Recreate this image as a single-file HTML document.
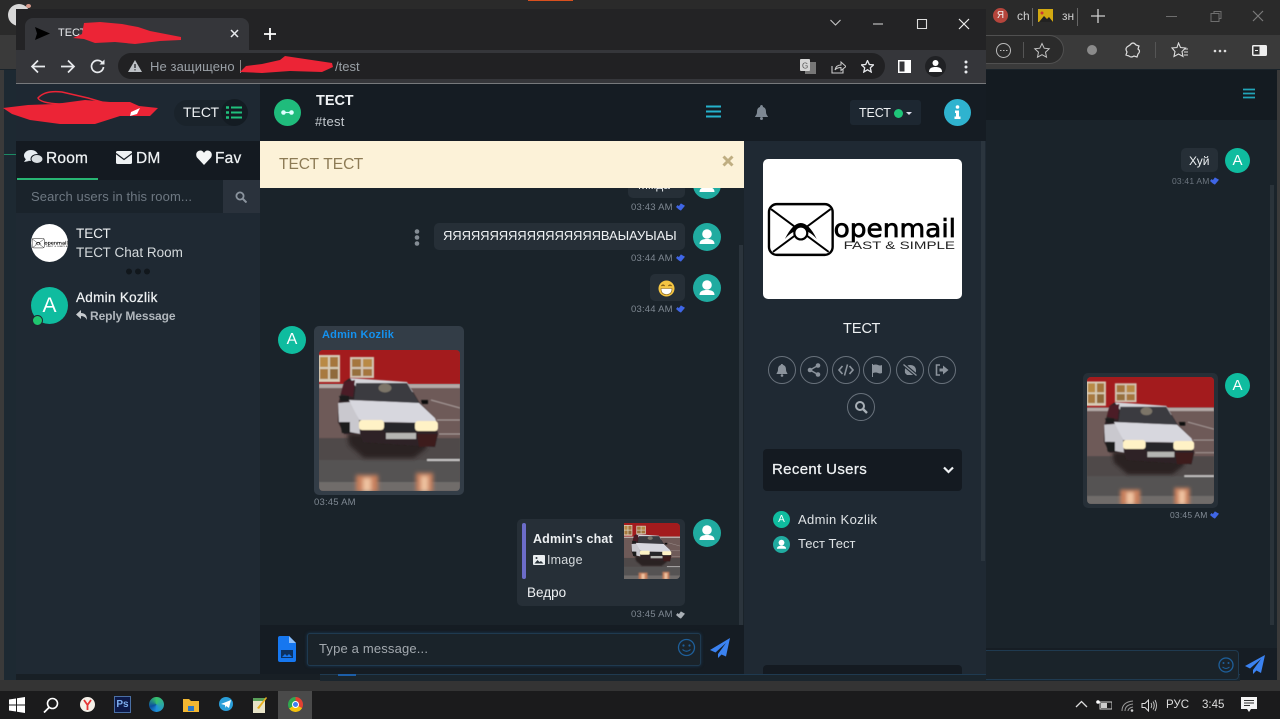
<!DOCTYPE html>
<html lang="ru"><head><meta charset="utf-8"><title>TECT</title>
<style>
html,body{margin:0;padding:0;width:1280px;height:719px;overflow:hidden;background:#1a232a}
body{position:relative;font-family:"Liberation Sans","DejaVu Sans",sans-serif;color:#eef1f3}
.b,.t,svg.a{position:absolute}
.t{white-space:nowrap;line-height:20px;height:20px}
.av{position:absolute;width:28px;height:28px;border-radius:50%;background:#20aba0;overflow:hidden}
.ag{position:absolute;border-radius:50%;background:#0fbc9f;color:#fff;text-align:center}
.bub{position:absolute;background:#262f37;border-radius:5px}
.tm{font-size:9.5px;color:#7f8892;letter-spacing:.2px}
.rnd{position:absolute;width:26px;height:26px;border:1px solid #68717b;border-radius:50%}
.rnd svg{position:absolute;left:5px;top:5px}
.m{-webkit-text-stroke:.25px currentColor}
</style></head><body>
<svg width="0" height="0" style="position:absolute">
<defs>
<filter id="bl" x="-5%" y="-5%" width="110%" height="110%"><feGaussianBlur stdDeviation=".6"/></filter>
<filter id="bl2" x="-30%" y="-30%" width="160%" height="160%"><feGaussianBlur stdDeviation="2"/></filter>
<symbol id="car" viewBox="0 0 141 141" preserveAspectRatio="none">
<rect width="141" height="141" fill="#5a5150"/>
<rect width="141" height="34" fill="#a31b1d"/>
<g filter="url(#bl)">
<rect x="-1" y="5" width="22" height="27" fill="#d8cdb8"/>
<rect x="1" y="7" width="8" height="10" fill="#b98a45"/><rect x="11" y="7" width="8" height="10" fill="#a5763c"/><rect x="1" y="19" width="8" height="10" fill="#a87a3f"/><rect x="11" y="19" width="8" height="10" fill="#8f6a3a"/>
<rect x="31" y="7" width="24" height="21" fill="#d3c5b3"/>
<rect x="33" y="9" width="9" height="8" fill="#a5763c"/><rect x="44" y="9" width="9" height="8" fill="#b98a45"/><rect x="33" y="19" width="9" height="7" fill="#96703e"/><rect x="44" y="19" width="9" height="7" fill="#a5763c"/>
<rect y="34" width="141" height="4" fill="#b4a9a6"/>
<rect y="38" width="141" height="50" fill="#6e5a58"/>
<path d="M112 50l29 8M118 70h23M120 84h23" stroke="#a79b99" stroke-width="1"/>
<rect y="88" width="141" height="22" fill="#4f4a49"/>
<rect y="110" width="141" height="31" fill="#545252"/>
<rect x="108" y="109" width="33" height="2" fill="#c4c2c2"/>
<rect x="0" y="132" width="141" height="9" fill="#6f6c6b"/>
</g>
<g filter="url(#bl2)"><rect x="37" y="125" width="22" height="17" fill="#c87f5c"/><rect x="97" y="123" width="17" height="19" fill="#c87f5c"/><rect x="44" y="128" width="8" height="14" fill="#efc3a0"/><rect x="102" y="126" width="7" height="16" fill="#efc3a0"/></g>
<g filter="url(#bl2)"><path d="M28 83L104 84 108 98 95 108H45L30 95Z" fill="#2a2122"/></g>
<g filter="url(#bl)">
<path d="M19 55L25 32 31 28 88 32 100 52 116 68 119 84 116 97 44 92 41 84H25L19 72Z" fill="#2e2325"/>
<path d="M31 28L88 32 94 42 37 37Z" fill="#d5d5da"/>
<path d="M37 33L88 33 100 53 35 50Z" fill="#3a3b41"/>
<ellipse cx="66" cy="38" rx="6.500" ry="4.500" fill="#7b7468"/>
<path d="M25 32L36 30 34 47 22 44Z" fill="#4b1f25"/>
<path d="M19 53L32 52 40 70 41 84 31 82 26 72H20Z" fill="#c9c8ce"/>
<path d="M21 72h10v11h-8z" fill="#1d1b1d"/>
<path d="M30 50L100 53 116 68 118 73 62 72 40 70Z" fill="#d7d7de"/>
<path d="M102 50h7v4h-6z" fill="#111"/><path d="M20 46h10v5h-8z" fill="#1a1a1d"/>
<rect x="40" y="70" width="25" height="10" rx="3" fill="#fff2c6"/>
<rect x="96" y="71" width="23" height="10" rx="3" fill="#fff2c6"/>
<rect x="65" y="73" width="31" height="9" fill="#27252a"/>
<rect x="67" y="83" width="30" height="6" fill="#b5b5b2"/>
<path d="M98 84h20l-2 12-16 1z" fill="#3c1d1f"/>
</g>
</symbol>
<symbol id="user" viewBox="0 0 28 28"><circle cx="14" cy="11" r="4.800" fill="#fff"/><path d="M6.500 21c0-4 3.500-5 7.500-5s7.500 1 7.500 5z" fill="#fff"/></symbol>
<symbol id="check" viewBox="0 0 11 9"><path d="M0 4.500l2-2.500 1.500 1.500L6 0l5 3-5 6-2.500-1.500z" fill="#3f66e6"/></symbol>
<symbol id="checkg" viewBox="0 0 11 9"><path d="M0 4.500l2-2.500 1.500 1.500L6 0l5 3-5 6-2.500-1.500z" fill="#aab0b6"/></symbol>
<symbol id="logo" viewBox="0 0 200 140">
<rect x="6" y="45" width="64" height="51" rx="8" fill="none" stroke="#000" stroke-width="2.400"/>
<path d="M8 50L66 93M68 50L10 93" stroke="#000" stroke-width="2" fill="none"/>
<path d="M22 80Q38 48 54 80Q38 62 22 80Z" fill="#000"/><circle cx="38" cy="74" r="6.500" fill="#fff" stroke="#000" stroke-width="2.200"/>
<text x="71" y="78" font-family="DejaVu Sans,sans-serif" font-size="25" stroke="#000" stroke-width=".7" textLength="123" lengthAdjust="spacingAndGlyphs">openmail</text>
<text x="81" y="90" font-family="Liberation Sans,sans-serif" font-size="11" fill="#222" textLength="112" lengthAdjust="spacingAndGlyphs">FAST &amp; SIMPLE</text>
</symbol>
</defs></svg>

<!-- outer Edge window -->
<div class="b" style="left:0;top:0;width:1280px;height:35px;background:#2a2a2a"></div>
<div class="b" style="left:0;top:35px;width:1280px;height:34px;background:#3a3a3a"></div>
<div class="b" style="left:528px;top:0;width:45px;height:1px;background:#d9501e"></div>
<div class="b" style="left:8px;top:4px;width:22px;height:22px;border-radius:50%;background:#d8d8d8"></div>
<div class="b" style="left:26px;top:4px;width:5px;height:4px;border-radius:50%;background:#d79a8c"></div>
<div class="b" style="left:0;top:70px;width:1280px;height:610px;background:#1a232a"></div>
<div class="b" style="left:4px;top:70px;width:12px;height:610px;background:#1d2932"></div>
<div class="b" style="left:0;top:70px;width:4px;height:620px;background:#3a3a3a"></div>
<div class="b" style="left:4px;top:154px;width:12px;height:1px;background:#1d8a63"></div>
<div class="b" style="left:986px;top:70px;width:291px;height:50px;background:#141b21"></div>
<div class="b" style="left:1277px;top:70px;width:3px;height:620px;background:#3a3a3a"></div>
<div class="b" style="left:0;top:680px;width:1280px;height:11px;background:#343434"></div>
<div class="b" style="left:986px;top:648px;width:291px;height:32px;background:#161d24"></div>
<div class="b" style="left:320px;top:674px;width:920px;height:6px;background:#1a252d;border-top:1px solid #1f3a50"></div>
<div class="b" style="left:986px;top:650px;width:252px;height:28px;background:#1a232a;border:1px solid #1f3a50;border-left:0;border-radius:0 4px 4px 0"></div>
<div class="b" style="left:16px;top:674px;width:304px;height:6px;background:#181f25"></div>
<div class="b" style="left:338px;top:674px;width:18px;height:2px;background:#1c5ea8"></div>

<!-- Edge tab bar right -->
<div class="b" style="left:993px;top:8px;width:15px;height:15px;border-radius:50%;background:#b5453c;color:#eee;font-size:10px;line-height:15px;text-align:center">Я</div>
<div class="t" style="left:1017px;top:6px;font-size:12px;color:#cfcfcf">ch</div>
<div class="b" style="left:1032px;top:8px;width:1px;height:18px;background:#666"></div>
<svg class="a" style="left:1038px;top:9px" width="15" height="13"><rect width="15" height="13" fill="#d2a912"/><path d="M1 13l5-6 3 3 2-2 4 5z" fill="#222"/><circle cx="4" cy="4" r="1.500" fill="#c33"/></svg>
<div class="t" style="left:1062px;top:6px;font-size:12px;color:#cfcfcf">зн</div>
<div class="b" style="left:1077px;top:8px;width:1px;height:18px;background:#666"></div>
<svg class="a" style="left:1090px;top:8px" width="16" height="16"><path d="M8 1v14M1 8h14" stroke="#cfcfcf" stroke-width="1.300"/></svg>
<svg class="a" style="left:1166px;top:10px" width="100" height="13"><path d="M0 6.500h11" stroke="#6e6e6e"/><path d="M45 3.500h8v8h-8zM48 3.500v-2h7v7h-2" fill="none" stroke="#6e6e6e"/><path d="M87 1l10 10M97 1L87 11" stroke="#7a7a7a" stroke-width="1.200"/></svg>

<!-- Edge toolbar right -->
<div class="b" style="left:986px;top:35px;width:78px;height:29px;background:#2b2b2b;border:1px solid #505050;border-left:0;border-radius:0 15px 15px 0;box-sizing:border-box"></div>
<svg class="a" style="left:994px;top:41px" width="60" height="18"><circle cx="9.500" cy="9.500" r="7" fill="none" stroke="#bbb"/><path d="M6 9.500h1.500M9 9.500h1.500M12 9.500h1.500" stroke="#bbb"/><path d="M29.500 1v16" stroke="#555"/><path d="M48 2.500l2.200 4.700 5 .6-3.700 3.400 1 5-4.500-2.500-4.500 2.500 1-5-3.700-3.400 5-.6z" fill="none" stroke="#c4c4c4"/></svg>
<div class="b" style="left:1087px;top:45px;width:10px;height:10px;border-radius:50%;background:#8b8b8b"></div>
<svg class="a" style="left:1125px;top:42px" width="16" height="17"><path d="M5 3q3-4 6 0l3 1-1 3q3 2 0 5l-1 3-3-1q-3 2-5 0l-3-1 1-3q-2-3 0-5z" fill="none" stroke="#ddd" stroke-width="1.200"/></svg>
<div class="b" style="left:1155px;top:42px;width:1px;height:16px;background:#555"></div>
<svg class="a" style="left:1171px;top:42px" width="18" height="17"><path d="M7.500 1l2 4.500 5 .5-3.500 3.500 1 5-4.500-2.500-4.500 2.500 1-5L1 6l5-.5z" fill="none" stroke="#ddd" stroke-width="1.100"/><path d="M13 7h4M13 10h4M13 13h4" stroke="#ddd"/></svg>
<svg class="a" style="left:1213px;top:49px" width="14" height="4"><circle cx="2" cy="2" r="1.300" fill="#ddd"/><circle cx="7" cy="2" r="1.300" fill="#ddd"/><circle cx="12" cy="2" r="1.300" fill="#ddd"/></svg>
<svg class="a" style="left:1252px;top:45px" width="15" height="12"><rect width="15" height="11" rx="1.500" fill="#eee"/><rect x="1.500" y="1.500" width="6" height="8" fill="#333"/><path d="M3 5.500h3" stroke="#eee"/></svg>

<!-- background chat page right -->
<svg class="a" style="left:1243px;top:88px" width="12" height="11"><path d="M0 1.500h12M0 5.500h12M0 9.500h12" stroke="#22a5b8" stroke-width="1.800"/></svg>
<div class="b" style="left:986px;top:120px;width:291px;height:528px;background:#1a232a"></div>
<div class="b" style="left:1270px;top:185px;width:4px;height:440px;background:#2a333a"></div>
<div class="bub" style="left:1181px;top:148px;width:37px;height:24px"></div>
<div class="t" style="left:1189px;top:151px;font-size:12px">Хуй</div>
<div class="ag" style="left:1225px;top:148px;width:25px;height:25px;font-size:15px;line-height:25px">A</div>
<div class="t tm" style="left:1172px;top:171px;font-size:8.500px;color:#6c757f">03:41 AM</div>
<svg class="a" style="left:1210px;top:177px" width="9" height="8"><use href="#check"/></svg>
<div class="bub" style="left:1083px;top:373px;width:135px;height:135px"></div>
<svg class="a" style="left:1087px;top:377px;border-radius:4px" width="127" height="127"><use href="#car" width="127" height="127"/></svg>
<div class="ag" style="left:1225px;top:373px;width:25px;height:25px;font-size:15px;line-height:25px">A</div>
<div class="t tm" style="left:1170px;top:505px;font-size:8.500px;color:#838c96">03:45 AM</div>
<svg class="a" style="left:1210px;top:511px" width="9" height="8"><use href="#check"/></svg>
<svg class="a" style="left:1217px;top:656px" width="18" height="18"><circle cx="9" cy="9" r="7" fill="none" stroke="#1e5f9a" stroke-width="1.300"/><circle cx="6.500" cy="7" r="1" fill="#1e5f9a"/><circle cx="11.500" cy="7" r="1" fill="#1e5f9a"/><path d="M5.500 11q3.500 3 7 0" fill="none" stroke="#1e5f9a"/></svg>
<svg class="a" style="left:1245px;top:655px" width="20" height="19"><path d="M20 0L0 11l5 2.500L16 4 8 15v4l3.500-3.500L16 18z" fill="#3b82f0"/></svg>

<!-- Chrome window -->
<div class="b" style="left:16px;top:9px;width:970px;height:41px;background:#232325"></div>
<div class="b" style="left:25px;top:18px;width:224px;height:32px;background:#35363a;border-radius:8px 8px 0 0"></div>
<svg class="a" style="left:35px;top:27px" width="15" height="13"><path d="M0 0l15 6.500L0 13l2-6.500z" fill="#000"/></svg>
<div class="t" style="left:58px;top:23px;font-size:11px;color:#e8eaed">ТЕСТ -</div>
<svg class="a" style="left:230px;top:29px" width="9" height="9"><path d="M1 1l7 7M8 1L1 8" stroke="#e8eaed" stroke-width="1.500"/></svg>
<svg class="a" style="left:264px;top:28px" width="12" height="12"><path d="M6 0v12M0 6h12" stroke="#fff" stroke-width="1.800"/></svg>
<svg class="a" style="left:830px;top:19px" width="11" height="8"><path d="M.5 1l5 5 5-5" fill="none" stroke="#c8c8c8" stroke-width="1.100"/></svg>
<svg class="a" style="left:873px;top:17px" width="100" height="14"><path d="M0 7h10" stroke="#ddd"/><path d="M44.500 2.500h9v9h-9z" fill="none" stroke="#ddd" stroke-width="1.100"/><path d="M86 2l10 10M96 2L86 12" stroke="#eee" stroke-width="1.200"/></svg>
<!-- toolbar -->
<div class="b" style="left:16px;top:50px;width:970px;height:33px;background:#35363a"></div>
<div class="b" style="left:16px;top:83px;width:970px;height:1px;background:#77797c"></div>
<div class="b" style="left:118px;top:53px;width:767px;height:26px;border-radius:13px;background:#212123"></div>
<svg class="a" style="left:30px;top:58px" width="76" height="17"><path d="M15 8.500H2M8 2.500l-6 6 6 6" fill="none" stroke="#e8eaed" stroke-width="1.700"/><path d="M31 8.500h13M38 2.500l6 6-6 6" fill="none" stroke="#e8eaed" stroke-width="1.700"/><path d="M72.500 5a6 6 0 1 0 1 4" fill="none" stroke="#e8eaed" stroke-width="1.700"/><path d="M74.500 1.500v5h-5z" fill="#e8eaed"/></svg>
<svg class="a" style="left:128px;top:60px" width="14" height="12"><path d="M7 0l7 12H0z" fill="#bdc1c6"/><path d="M7 4v4M7 9.200v1.200" stroke="#202124" stroke-width="1.300"/></svg>
<div class="t" style="left:150px;top:57px;font-size:13px;color:#9aa0a6;letter-spacing:.1px">Не защищено</div>
<div class="b" style="left:240px;top:60px;width:1px;height:13px;background:#888"></div>
<div class="t" style="left:335px;top:57px;font-size:13px;color:#9aa0a6">/test</div>
<svg class="a" style="left:800px;top:59px" width="16" height="15"><rect x="5" y="3" width="11" height="12" fill="#777"/><rect width="10" height="12" rx="1" fill="#d5d5d5"/><text x="2" y="9.500" font-size="8" font-family="Liberation Sans,sans-serif" fill="#555">G</text></svg>
<svg class="a" style="left:831px;top:60px" width="15" height="14"><path d="M1 6v7h11V9" fill="none" stroke="#ccc" stroke-width="1.100"/><path d="M4 10q1-5 6-5V2l5 4.500-5 4V7.500q-4 0-6 2.500z" fill="none" stroke="#ccc"/></svg>
<svg class="a" style="left:861px;top:60px" width="13" height="13"><path d="M6.500.5l1.800 4 4.200.4-3.200 2.900.9 4.200-3.700-2.200-3.700 2.200.9-4.200L.5 4.900l4.200-.4z" fill="none" stroke="#e8eaed" stroke-width="1.300"/></svg>
<svg class="a" style="left:898px;top:60px" width="13" height="13"><rect x=".75" y=".75" width="11.500" height="11.500" fill="none" stroke="#fff" stroke-width="1.500"/><rect x="6.500" y="1" width="5.500" height="11" fill="#fff"/></svg>
<div class="b" style="left:925px;top:56px;width:21px;height:21px;border-radius:50%;background:#202124"></div>
<svg class="a" style="left:929px;top:59px" width="13" height="14"><circle cx="6.500" cy="4" r="3" fill="#fff"/><path d="M0 13c0-4 3-5 6.500-5s6.500 1 6.500 5z" fill="#fff"/></svg>
<svg class="a" style="left:964px;top:60px" width="4" height="14"><circle cx="2" cy="2" r="1.500" fill="#e8eaed"/><circle cx="2" cy="7" r="1.500" fill="#e8eaed"/><circle cx="2" cy="12" r="1.500" fill="#e8eaed"/></svg>

<!-- App left sidebar -->
<div class="b" style="left:16px;top:84px;width:244px;height:590px;background:#1f2933"></div>
<div class="b" style="left:16px;top:84px;width:244px;height:57px;background:#1e2832"></div>
<div class="b" style="left:174px;top:100px;width:72px;height:26px;border-radius:13px;background:#1a232b"></div>
<div class="t" style="left:183px;top:102px;font-size:14px">ТЕСТ</div>
<div class="b" style="left:221px;top:99px;width:27px;height:27px;border-radius:50%;background:#141c23"></div>
<svg class="a" style="left:226px;top:106px" width="16" height="13"><path d="M0 1.500h3M0 6.500h3M0 11.500h3" stroke="#20c07c" stroke-width="2.400"/><path d="M5 1.500h11M5 6.500h11M5 11.500h11" stroke="#20c07c" stroke-width="2"/></svg>
<div class="b" style="left:16px;top:141px;width:244px;height:39px;background:#141a21"></div>
<div class="b" style="left:17px;top:178px;width:81px;height:2px;background:#28b573"></div>
<svg class="a" style="left:24px;top:150px" width="19" height="15"><ellipse cx="7" cy="5.500" rx="7" ry="5.500" fill="#e8eef2"/><path d="M2 9l-2 3 5-1z" fill="#e8eef2"/><ellipse cx="13" cy="9" rx="6" ry="4.500" fill="#d9dfe2" stroke="#141a21"/></svg>
<div class="t m" style="left:46px;top:149px;font-size:15.500px;letter-spacing:.2px">Room</div>
<svg class="a" style="left:116px;top:151px" width="16" height="13"><rect width="16" height="13" rx="1.500" fill="#eef1f3"/><path d="M0 2.500l8 6 8-6" fill="none" stroke="#141a21" stroke-width="1.200"/></svg>
<div class="t m" style="left:136px;top:149px;font-size:15.500px;letter-spacing:.2px">DM</div>
<svg class="a" style="left:196px;top:150px" width="16" height="15"><path d="M8 15L1 7.500C-1 4 1 .5 4.500.5 6 .5 7.500 1.500 8 3c.5-1.500 2-2.500 3.500-2.500C15 .5 17 4 15 7.500z" fill="#f3f5f6"/></svg>
<div class="t m" style="left:215px;top:149px;font-size:15.500px;letter-spacing:.2px">Fav</div>
<div class="b" style="left:16px;top:180px;width:207px;height:33px;background:#1a232b"></div>
<div class="t" style="left:31px;top:187px;font-size:13px;color:#6e7882;letter-spacing:.1px">Search users in this room...</div>
<div class="b" style="left:223px;top:180px;width:37px;height:33px;background:#2a323c"></div>
<svg class="a" style="left:235px;top:191px" width="12" height="12"><circle cx="5" cy="5" r="3.600" fill="none" stroke="#8b949e" stroke-width="1.800"/><path d="M7.500 7.500l4 4" stroke="#8b949e" stroke-width="2"/></svg>
<div class="b" style="left:31px;top:224px;width:37px;height:38px;border-radius:50%;background:#fff;overflow:hidden"><svg style="position:absolute;left:0;top:-7px" width="38" height="52"><use href="#logo" width="38" height="52"/></svg></div>
<div class="t" style="left:76px;top:224px;font-size:13.500px">ТЕСТ</div>
<div class="t" style="left:76px;top:243px;font-size:13.500px;color:#d5dadd">ТЕСТ Chat Room</div>
<svg class="a" style="left:125px;top:268px" width="26" height="7"><circle cx="4" cy="3.500" r="3" fill="#11171c"/><circle cx="13" cy="3.500" r="3" fill="#11171c"/><circle cx="22" cy="3.500" r="3" fill="#11171c"/></svg>
<div class="ag" style="left:31px;top:287px;width:37px;height:37px;font-size:21px;line-height:37px">A</div>
<div class="b" style="left:32px;top:315px;width:9px;height:9px;border-radius:50%;background:#1fc66f;border:1px solid #1f2933"></div>
<div class="t m" style="left:76px;top:288px;font-size:13.500px;letter-spacing:.3px">Admin Kozlik</div>
<svg class="a" style="left:76px;top:310px" width="12" height="11"><path d="M5 0L0 4.500 5 9V6q4 0 6 4 0-7-6-7z" fill="#c7cbcf"/></svg>
<div class="t" style="left:90px;top:306px;font-size:12px;color:#b1b7bd;font-weight:bold;letter-spacing:-.1px">Reply Message</div>

<!-- red redactions -->
<svg class="a" style="left:0;top:0" width="370" height="130">
<path d="M84 23L100 22 122 24 138 27 150 31 181 37 181 40 160 41 135 44 115 42 95 43 84 39 73 38 82 34Z" fill="#ec2436"/>
<path d="M240 72L246 66 262 64 280 60 285 56 305 59 332 63 333 67 322 72 290 71 262 73Z" fill="#ec2436"/>
<path d="M3 108L28 105 55 104 85 100 110 102 130 102 139 106 158 108 150 116 120 116 95 124 60 124 30 120 12 114Z" fill="#ec2436"/>
<path d="M38 98Q45 90 62 92L88 98 105 103 60 104Q40 103 38 98Z" fill="none" stroke="#ec2436" stroke-width="1.500"/>
<path d="M131 112l9-4-3 6-7 2z" fill="#fff"/>
</svg>

<!-- Header mid -->
<div class="b" style="left:260px;top:84px;width:726px;height:57px;background:#151c23"></div>
<div class="b" style="left:274px;top:99px;width:27px;height:27px;border-radius:50%;background:#1fbc7c"></div>
<svg class="a" style="left:281px;top:109px" width="13" height="7"><circle cx="2.500" cy="3.500" r="2.300" fill="#dff"/><circle cx="10.500" cy="3.500" r="2.300" fill="#dff"/><path d="M2 3.500h9" stroke="#dff" stroke-width="1.200"/></svg>
<div class="t" style="left:316px;top:91px;font-size:14.500px;font-weight:bold">ТЕСТ</div>
<div class="t" style="left:315px;top:112px;font-size:13px;color:#c4cacf;letter-spacing:.3px">#test</div>
<svg class="a" style="left:706px;top:105px" width="15" height="13"><path d="M0 1.500h15M0 6.500h15M0 11.500h15" stroke="#25b2cc" stroke-width="2"/></svg>
<svg class="a" style="left:755px;top:105px" width="13" height="15"><path d="M6.500 0C7.500 0 8 1 8 2c2 .5 3 2 3 5 0 3 2 4 2 5H0c0-1 2-2 2-5 0-3 1-4.500 3-5 0-1 .5-2 1.500-2z" fill="#7e8893"/><circle cx="6.500" cy="13.500" r="1.500" fill="#7e8893"/></svg>
<div class="b" style="left:850px;top:100px;width:71px;height:25px;border-radius:3px;background:#1d2731"></div>
<div class="t" style="left:859px;top:103px;font-size:12.500px;letter-spacing:-.1px">ТЕСТ</div>
<div class="b" style="left:894px;top:109px;width:9px;height:9px;border-radius:50%;background:#1fc67a"></div>
<svg class="a" style="left:906px;top:112px" width="6" height="3"><path d="M0 0h6L3 3z" fill="#dde"/></svg>
<div class="b" style="left:944px;top:99px;width:27px;height:27px;border-radius:50%;background:#2fb3cf"></div>
<svg class="a" style="left:954px;top:105px" width="7" height="14"><circle cx="3.500" cy="2" r="1.800" fill="#fff"/><path d="M1 5.500h4v6h1.500V14H.5v-2.500H2V8H1z" fill="#fff"/></svg>

<!-- Chat -->
<div class="b" style="left:260px;top:141px;width:484px;height:484px;background:#1a232a"></div>
<div class="b" style="left:739px;top:245px;width:4px;height:380px;background:#2b343c"></div>
<div class="bub" style="left:628px;top:175px;width:57px;height:23px"></div>
<div class="t" style="left:638px;top:175px;font-size:12px">Ммда</div>
<div class="av" style="left:693px;top:171px"><svg width="28" height="28"><use href="#user"/></svg></div>
<div class="t tm" style="left:631px;top:198px">03:43 AM</div>
<svg class="a" style="left:676px;top:203px" width="9" height="8"><use href="#check"/></svg>
<!-- alert -->
<div class="b" style="left:260px;top:141px;width:484px;height:47px;background:#fcf2d8"></div>
<div class="t" style="left:279px;top:155px;font-size:15.500px;color:#8d7b55">ТЕСТ ТЕСТ</div>
<svg class="a" style="left:722px;top:155px" width="12" height="12"><path d="M1.500 1.500l9 9M10.500 1.500l-9 9" stroke="#bfae81" stroke-width="3"/></svg>

<svg class="a" style="left:414px;top:229px" width="6" height="17"><circle cx="3" cy="2.500" r="2.300" fill="#858d95"/><circle cx="3" cy="8.500" r="2.300" fill="#858d95"/><circle cx="3" cy="14.500" r="2.300" fill="#858d95"/></svg>
<div class="bub" style="left:434px;top:223px;width:251px;height:27px"></div>
<div class="t" style="left:443px;top:226px;font-size:13px;letter-spacing:-.1px">ЯЯЯЯЯЯЯЯЯЯЯЯЯЯЯЯЯВАЫАУЫАЫ</div>
<div class="av" style="left:693px;top:223px"><svg width="28" height="28"><use href="#user"/></svg></div>
<div class="t tm" style="left:631px;top:249px">03:44 AM</div>
<svg class="a" style="left:676px;top:254px" width="9" height="8"><use href="#check"/></svg>
<div class="bub" style="left:650px;top:274px;width:35px;height:27px"></div>
<svg class="a" style="left:658px;top:280px" width="17" height="17"><circle cx="8.500" cy="8.500" r="8" fill="#f4c542"/><path d="M3 8.500h11q0 6-5.500 6T3 8.500z" fill="#fff" stroke="#7a5a1a" stroke-width=".6"/><path d="M3.500 6q1.500-2 3 0M10.500 6q1.500-2 3 0" fill="none" stroke="#6a4a10" stroke-width="1.100"/></svg>
<div class="av" style="left:693px;top:274px"><svg width="28" height="28"><use href="#user"/></svg></div>
<div class="t tm" style="left:631px;top:300px">03:44 AM</div>
<svg class="a" style="left:676px;top:305px" width="9" height="8"><use href="#check"/></svg>

<div class="ag" style="left:278px;top:326px;width:28px;height:28px;font-size:16px;line-height:28px">A</div>
<div class="bub" style="left:314px;top:326px;width:150px;height:169px;background:#333d47"></div>
<div class="t" style="left:322px;top:325px;font-size:11px;font-weight:bold;color:#1492f0;letter-spacing:.2px">Admin Kozlik</div>
<svg class="a" style="left:318.500px;top:350px;border-radius:4px" width="141" height="141"><use href="#car" width="141" height="141"/></svg>
<div class="t tm" style="left:314px;top:493px">03:45 AM</div>

<div class="bub" style="left:517px;top:519px;width:168px;height:87px"></div>
<div class="b" style="left:522px;top:523px;width:4px;height:56px;border-radius:2px;background:#6c6cc8"></div>
<div class="t" style="left:533px;top:529px;font-size:12.500px;font-weight:bold;letter-spacing:.15px">Admin's chat</div>
<svg class="a" style="left:533px;top:555px" width="12" height="10"><rect width="12" height="10" rx="1" fill="#e9edef"/><path d="M1.500 8.500l3-3.500 2 2 1.500-1 2.500 2.500z" fill="#28323a"/><circle cx="3.500" cy="3" r="1" fill="#28323a"/></svg>
<div class="t" style="left:547px;top:550px;font-size:12.500px;color:#d5dadd;letter-spacing:.2px">Image</div>
<svg class="a" style="left:624px;top:523px;border-radius:0 4px 4px 0" width="56" height="56"><use href="#car" width="56" height="56"/></svg>
<div class="t" style="left:527px;top:583px;font-size:13.500px">Ведро</div>
<div class="av" style="left:693px;top:519px"><svg width="28" height="28"><use href="#user"/></svg></div>
<div class="t tm" style="left:631px;top:605px">03:45 AM</div>
<svg class="a" style="left:676px;top:611px" width="9" height="8"><use href="#checkg"/></svg>

<!-- input bar -->
<div class="b" style="left:260px;top:625px;width:484px;height:49px;background:#151c23"></div>
<svg class="a" style="left:278px;top:636px" width="18" height="26"><path d="M0 2q0-2 2-2h9l7 7v17q0 2-2 2H2q-2 0-2-2z" fill="#1677f0"/><path d="M11 0l7 7h-7z" fill="#8fc0fa"/><rect x="3" y="14" width="12" height="8" fill="#0c3160"/><path d="M4 21l3-3 2 2 2-2 3 3z" fill="#1677f0"/></svg>
<div class="b" style="left:307px;top:633px;width:392px;height:31px;background:#1a232a;border:1px solid #1f3a50;border-radius:3px;box-shadow:0 0 3px #1a3a55"></div>
<div class="t" style="left:319px;top:639px;font-size:13px;color:#a3a9af;letter-spacing:.17px">Type a message...</div>
<svg class="a" style="left:677px;top:638px" width="19" height="19"><circle cx="9.500" cy="9.500" r="8" fill="none" stroke="#1e5f9a" stroke-width="1.300"/><circle cx="6.500" cy="7.500" r="1.100" fill="#1e5f9a"/><circle cx="12.500" cy="7.500" r="1.100" fill="#1e5f9a"/><path d="M5.500 11.500q4 3.500 8 0" fill="none" stroke="#1e5f9a" stroke-width="1.100"/></svg>
<svg class="a" style="left:710px;top:638px" width="20" height="20"><path d="M20 0L0 12l5.500 2.500L16 5 8 16v4l3.500-3.500L16 18.500z" fill="#3b82f0"/></svg>

<!-- right panel -->
<div class="b" style="left:744px;top:141px;width:242px;height:533px;background:#1f2933"></div>
<div class="b" style="left:981px;top:141px;width:4px;height:420px;background:#2b353e"></div>
<div class="b" style="left:763px;top:159px;width:199px;height:140px;background:#fff;border-radius:5px;overflow:hidden"><svg width="199" height="140"><use href="#logo" width="199" height="140"/></svg></div>
<div class="t" style="left:843px;top:319px;font-size:14.500px">ТЕСТ</div>
<div class="rnd" style="left:768px;top:356px"><svg width="16" height="16" viewBox="0 0 16 16"><path d="M8 2q1 0 1.200 1C11 3.500 12 5 12 7.500c0 2.500 1.500 3.500 1.500 4.500h-11C2.500 11 4 10 4 7.500 4 5 5 3.500 6.800 3 7 2 7 2 8 2z" fill="#8b939c"/><circle cx="8" cy="13.500" r="1.300" fill="#8b939c"/></svg></div>
<div class="rnd" style="left:800px;top:356px"><svg width="16" height="16" viewBox="0 0 16 16"><circle cx="4" cy="8" r="2.300" fill="#8b939c"/><circle cx="12" cy="3.500" r="2.300" fill="#8b939c"/><circle cx="12" cy="12.500" r="2.300" fill="#8b939c"/><path d="M4 8l8-4.500M4 8l8 4.500" stroke="#8b939c" stroke-width="1.400"/></svg></div>
<div class="rnd" style="left:832px;top:356px"><svg width="16" height="16" viewBox="0 0 16 16"><path d="M4.500 4L1 8l3.500 4M11.500 4L15 8l-3.500 4" fill="none" stroke="#8b939c" stroke-width="1.700"/><path d="M9.500 2.500l-3 11" stroke="#8b939c" stroke-width="1.500"/></svg></div>
<div class="rnd" style="left:863px;top:356px"><svg width="16" height="16" viewBox="0 0 16 16"><path d="M3 2h1v1q3-1 5 0t4 0v8q-2 1-4 0t-5 0v4H3z" fill="#8b939c"/></svg></div>
<div class="rnd" style="left:896px;top:356px"><svg width="16" height="16" viewBox="0 0 16 16"><path d="M3 11Q2 3 8 3t6 6q0 3-2 4H5z" fill="#8b939c"/><path d="M1.500 2.500l13 11" stroke="#1f2933" stroke-width="3.500"/><path d="M1.500 2.500l13 11" stroke="#8b939c" stroke-width="1.300"/></svg></div>
<div class="rnd" style="left:928px;top:356px"><svg width="16" height="16" viewBox="0 0 16 16"><path d="M6 3H2.500v10H6" fill="none" stroke="#8b939c" stroke-width="1.600"/><path d="M5.500 6.500H9V3.500L14.500 8 9 12.500v-3H5.500z" fill="#8b939c"/></svg></div>
<div class="rnd" style="left:847px;top:393px"><svg width="16" height="16" viewBox="0 0 16 16"><circle cx="7" cy="7" r="4" fill="none" stroke="#a8afb6" stroke-width="2"/><path d="M10 10l4 4" stroke="#a8afb6" stroke-width="2.400"/></svg></div>
<div class="b" style="left:763px;top:449px;width:199px;height:42px;border-radius:4px;background:#141a21"></div>
<div class="t m" style="left:772px;top:460px;font-size:15px;letter-spacing:.35px">Recent Users</div>
<svg class="a" style="left:943px;top:466px" width="11" height="8"><path d="M1 1.500l4.500 4.500L10 1.500" fill="none" stroke="#eef1f3" stroke-width="2.200"/></svg>
<div class="ag" style="left:773px;top:511px;width:17px;height:17px;font-size:10px;line-height:17px">A</div>
<div class="t" style="left:798px;top:510px;font-size:13px;letter-spacing:.35px;color:#dfe3e6">Admin Kozlik</div>
<div class="av" style="left:773px;top:536px;width:17px;height:17px"><svg width="17" height="17"><use href="#user" width="17" height="17"/></svg></div>
<div class="t" style="left:798px;top:534px;font-size:13px;color:#dfe3e6">Тест Тест</div>
<div class="b" style="left:763px;top:665px;width:199px;height:9px;border-radius:4px 4px 0 0;background:#141a21"></div>

<!-- taskbar -->
<div class="b" style="left:0;top:691px;width:1280px;height:28px;background:#1b1b1c"></div>
<div class="b" style="left:278px;top:691px;width:34px;height:28px;background:#4a4a4a"></div>
<svg class="a" style="left:9px;top:697px" width="16" height="16"><path d="M0 2.500L7 1.500V7.500H0zM8 1.300L16 0V7.500H8zM0 8.500H7V14.500L0 13.500zM8 8.500H16V16L8 14.700z" fill="#fff"/></svg>
<svg class="a" style="left:43px;top:697px" width="16" height="16"><circle cx="9.500" cy="6.500" r="5" fill="none" stroke="#fff" stroke-width="1.600"/><path d="M6 10.500L1 15.500" stroke="#fff" stroke-width="1.800"/></svg>
<div class="b" style="left:80px;top:697px;width:15px;height:15px;border-radius:50%;background:#f5f0e8"></div>
<svg class="a" style="left:80px;top:697px" width="15" height="15"><path d="M4 3l3.500 5V13M11 3L7.500 8" fill="none" stroke="#e63535" stroke-width="1.800"/></svg>
<div class="b" style="left:114px;top:696px;width:15px;height:15px;background:#0d1a4a;border:1px solid #4a6fa5;color:#7fb0ef;font-size:10px;line-height:15px;text-align:center;font-weight:bold">Ps</div>
<div class="b" style="left:149px;top:697px;width:15px;height:15px;border-radius:50%;background:conic-gradient(#39c36a,#1f8fdb 50%,#0b4f9e 70%,#39c36a)"></div>
<svg class="a" style="left:183px;top:698px" width="16" height="14"><path d="M0 1h6l2 2h8v11H0z" fill="#f2b732"/><rect x="5" y="8" width="6" height="5" fill="#2a78c8"/></svg>
<div class="b" style="left:219px;top:697px;width:14px;height:14px;border-radius:50%;background:#2a9ed8"></div>
<svg class="a" style="left:221px;top:700px" width="10" height="8"><path d="M0 4l10-4-2 8-3-2-1 2V5z" fill="#fff"/></svg>
<svg class="a" style="left:253px;top:697px" width="14" height="16"><rect width="12" height="16" y="1" fill="#e8e4c8"/><path d="M0 1h12v3H0z" fill="#5aa05a"/><path d="M4 11L13 0l1 1-8 11z" fill="#e8b020"/></svg>
<div class="b" style="left:288px;top:697px;width:15px;height:15px;border-radius:50%;background:conic-gradient(#e34133 0 33%,#f4c20d 33% 66%,#2fa84f 66% 100%)"></div>
<div class="b" style="left:292px;top:701px;width:7px;height:7px;border-radius:50%;background:#3f7ff0;border:1px solid #fff;box-sizing:border-box"></div>
<svg class="a" style="left:1075px;top:700px" width="13" height="8"><path d="M1 7l5.500-5.500L12 7" fill="none" stroke="#ddd" stroke-width="1.300"/></svg>
<svg class="a" style="left:1096px;top:700px" width="16" height="10"><rect x="4" y="2" width="12" height="7" fill="none" stroke="#ccc"/><rect x="5" y="3" width="6" height="5" fill="#ccc"/><circle cx="2" cy="2" r="1.800" fill="#fff"/></svg>
<svg class="a" style="left:1121px;top:700px" width="13" height="12"><path d="M1 11q0-9 11-10M4 11q0-6 8-7M7 11q0-3 5-4" fill="none" stroke="#999" stroke-width="1"/><circle cx="11" cy="10.500" r="1.300" fill="#ccc"/></svg>
<svg class="a" style="left:1141px;top:699px" width="16" height="13"><path d="M1 4.500h3L7.500 1v11L4 8.500H1z" fill="none" stroke="#ddd"/><path d="M10 4q1.500 2.500 0 5M12 2.500q2.500 4 0 8M14 1q3 5.500 0 11" fill="none" stroke="#ccc" stroke-width=".9"/></svg>
<div class="t" style="left:1166px;top:695px;font-size:11.500px;color:#ddd">РУС</div>
<div class="t" style="left:1202px;top:695px;font-size:11.500px;color:#ddd">3:45</div>
<svg class="a" style="left:1241px;top:697px" width="16" height="16"><path d="M0 0h16v12H10l-2 3-2-3H0z" fill="#f5f5f5"/><path d="M3 3.500h10M3 6h10M3 8.500h6" stroke="#333"/></svg>
</body></html>
